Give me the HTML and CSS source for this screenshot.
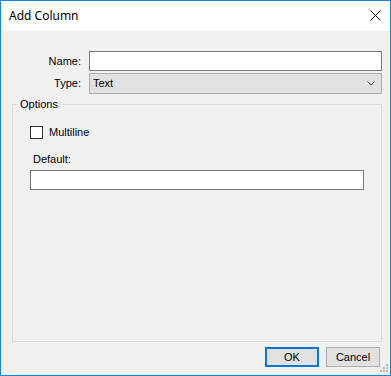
FILE: index.html
```html
<!DOCTYPE html>
<html lang="en">
<head>
    <meta charset="UTF-8">
    <meta name="viewport" content="width=device-width, initial-scale=1.0">
    <title>Add Column</title>
    <link rel="stylesheet" href="styles.css">
</head>
<body>
    <div class="window">
        <!-- Title Bar -->
        <div class="titlebar">
            <span class="title">Add Column</span>
            <svg class="close" width="11" height="11" viewBox="0 0 11 11">
                <path d="M0.5 0.5 L10.5 10.5 M10.5 0.5 L0.5 10.5" stroke="#000" stroke-width="1" fill="none"/>
            </svg>
        </div>

        <!-- Client Area -->
        <div class="client">
            <div class="form">
                <label class="form-label">Name:</label>
                <div class="textbox"></div>
                <label class="form-label">Type:</label>
                <div class="combo">
                    <span>Text</span>
                    <svg class="chevron" width="8" height="5" viewBox="0 0 8 5">
                        <path d="M0.5 0.5 L4 4 L7.5 0.5" stroke="#444" stroke-width="1" fill="none"/>
                    </svg>
                </div>
            </div>

            <div class="group">
                <span class="group-title">Options</span>
                <div class="check">
                    <span class="check-box"></span>
                    <span>Multiline</span>
                </div>
                <div class="field-label">Default:</div>
                <div class="textbox"></div>
            </div>

            <div class="buttons">
                <button class="btn btn-default">OK</button>
                <button class="btn">Cancel</button>
            </div>

            <svg class="grip" width="9" height="9" viewBox="0 0 9 9">
                <rect x="6" y="0" width="2" height="2" fill="#b8b8b8"/>
                <rect x="3" y="3" width="2" height="2" fill="#b8b8b8"/>
                <rect x="6" y="3" width="2" height="2" fill="#b8b8b8"/>
                <rect x="0" y="6" width="2" height="2" fill="#b8b8b8"/>
                <rect x="3" y="6" width="2" height="2" fill="#b8b8b8"/>
                <rect x="6" y="6" width="2" height="2" fill="#b8b8b8"/>
            </svg>
        </div>
    </div>
</body>
</html>
```

FILE: styles.css
```css
* {
    margin: 0;
    padding: 0;
    box-sizing: border-box;
    font-family: "Liberation Sans", Arial, sans-serif;
}

body {
    background-color: #ffffff;
}

/* Window */
.window {
    width: 391px;
    height: 376px;
    border: 1px solid #1883d7;
    display: flex;
    flex-direction: column;
}

.titlebar {
    height: 30px;
    background-color: #ffffff;
    display: flex;
    align-items: center;
    justify-content: space-between;
    padding: 0 9px 0 8px;
}

.title {
    font-family: "Noto Sans", sans-serif;
    font-size: 12px;
    line-height: 28px;
    color: #000;
}

.close {
    display: block;
    margin-top: -1px;
}

/* Client Area */
.client {
    flex: 1;
    background-color: #f0f0f0;
    position: relative;
    font-size: 11px;
    color: #000;
}

.form {
    display: grid;
    grid-template-columns: 80px 1fr;
    column-gap: 8px;
    row-gap: 2px;
    padding: 20px 8px 0 0;
}

.form-label {
    text-align: right;
    line-height: 20px;
}

.textbox {
    height: 20px;
    background-color: #fff;
    border: 1px solid #7a7a7a;
}

.combo {
    height: 21px;
    background-color: #e1e1e1;
    border: 1px solid #adadad;
    display: flex;
    align-items: center;
    justify-content: space-between;
    padding: 0 6px 0 3px;
    line-height: 19px;
}

.chevron {
    display: block;
}

/* Options Group */
.group {
    position: relative;
    height: 238px;
    margin: 10px 8px 0 11px;
    border: 1px solid #dcdcdc;
    padding: 21px 17px 0 17px;
}

.group-title {
    position: absolute;
    top: -7px;
    left: 5px;
    padding: 0 2px;
    line-height: 13px;
    background-color: #f0f0f0;
}

.check {
    display: flex;
    align-items: center;
    gap: 6px;
    height: 13px;
    line-height: 13px;
}

.check-box {
    width: 13px;
    height: 13px;
    border: 1px solid #333;
    background-color: #fff;
}

.field-label {
    margin-top: 14px;
    padding-left: 3px;
    line-height: 13px;
}

.group .textbox {
    margin-top: 4px;
}

/* Buttons */
.buttons {
    display: flex;
    justify-content: flex-end;
    gap: 7px;
    margin-top: 5px;
    padding-right: 10px;
}

.btn {
    width: 54px;
    height: 20px;
    background-color: #e1e1e1;
    border: 1px solid #adadad;
    font-size: 11px;
    color: #000;
}

.btn-default {
    border: 2px solid #0078d7;
}

.grip {
    position: absolute;
    right: 1px;
    bottom: 2px;
}
```
